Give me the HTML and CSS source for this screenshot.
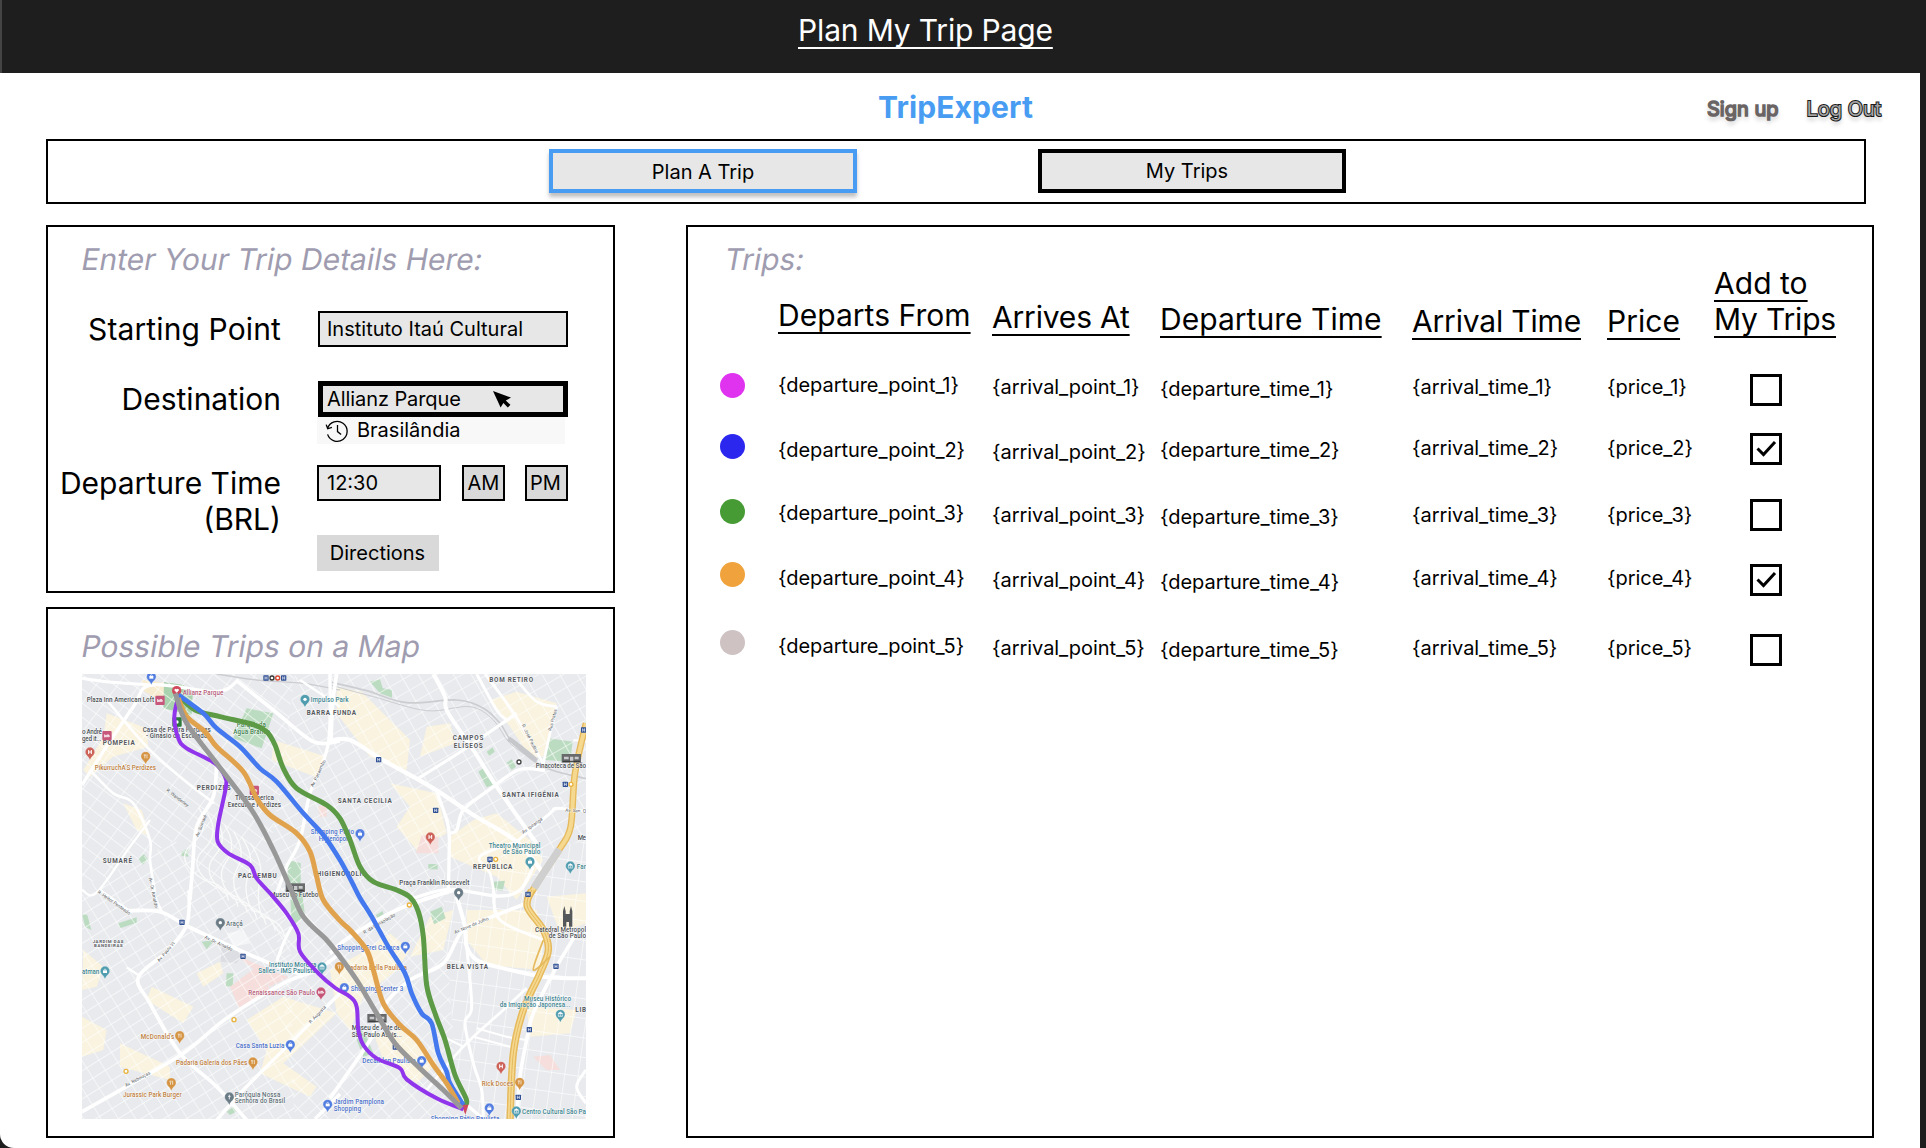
FILE: index.html
```html
<!DOCTYPE html>
<html lang="en">
<head>
<meta charset="utf-8">
<title>Plan My Trip Page</title>
<link rel="stylesheet" href="styles.css">
</head>
<body>
<header class="topbar"><h1 class="topbar-title">Plan My Trip Page</h1></header>
<main class="page">
  <div class="brandbar">
    <div class="brand">TripExpert</div>
    <div class="auth"><a class="signup">Sign up</a><a class="logout">Log Out</a></div>
  </div>
  <nav class="tabs">
    <button class="tab tab-active">Plan A Trip</button>
    <button class="tab tab-plain">My Trips</button>
  </nav>
  <div class="columns">
    <div class="left">
      <section class="panel details">
        <h2 class="panel-title">Enter Your Trip Details Here:</h2>
        <div class="field field-start">
          <span class="label">Starting Point</span>
          <span class="input">Instituto Itaú Cultural</span>
        </div>
        <div class="field field-dest">
          <span class="label">Destination</span>
          <div class="combo">
            <span class="input input-focus">Allianz Parque
              <svg class="cursor" viewBox="0 0 18 17"><path d="M0 0 L18 6.6 L12.8 9.6 L17.4 13.8 L14.8 16.6 L10.4 12 L7.6 16.6 Z"/></svg>
            </span>
            <span class="suggestion">
              <svg class="history" viewBox="0 0 24 24" fill="none" stroke="#000" stroke-width="1.3"><path d="M2.6 9.3A10 10 0 1 1 2.6 15.4M1.2 5.6l1.5 4.2 4.2-1.4M12.5 6v6.6l3.6 3"/></svg>
              Brasilândia
            </span>
          </div>
        </div>
        <div class="field field-time">
          <span class="label">Departure Time<br><span class="unit">(BRL)</span></span>
          <div class="time-side">
            <div class="time-row">
              <span class="input input-time">12:30</span>
              <button class="meridiem">AM</button>
              <button class="meridiem meridiem-pm">PM</button>
            </div>
            <button class="directions">Directions</button>
          </div>
        </div>
      </section>
      <section class="panel map-panel">
        <h2 class="panel-title">Possible Trips on a Map</h2>
        <svg class="map" id="map" viewBox="0 0 1512 1335"></svg>
      </section>
    </div>
    <section class="panel trips">
      <h2 class="panel-title">Trips:</h2>
      <div class="row head">
        <span></span>
        <span class="o0">Departs From</span><span class="o2 tight">Arrives At</span><span class="o4">Departure Time</span>
        <span class="o6 tight">Arrival Time</span><span class="o6">Price</span><span class="add">Add to<br><span class="tight">My Trips</span></span>
      </div>
      <div class="row r1">
        <i class="dot magenta"></i><span>{departure_point_1}</span><span class="o2">{arrival_point_1}</span><span class="o4">{departure_time_1}</span><span class="o2">{arrival_time_1}</span><span class="o2">{price_1}</span><i class="check m1"></i>
      </div>
      <div class="row r2">
        <i class="dot blue m1"></i><span class="o5">{departure_point_2}</span><span class="o7">{arrival_point_2}</span><span class="o5">{departure_time_2}</span><span class="o3">{arrival_time_2}</span><span class="o3">{price_2}</span><i class="check"><svg viewBox="0 0 26 26"><path d="M4.5 12.5l6 6L22 6"/></svg></i>
      </div>
      <div class="row r3">
        <i class="dot green"></i><span class="o2">{departure_point_3}</span><span class="o4">{arrival_point_3}</span><span class="o6">{departure_time_3}</span><span class="o4">{arrival_time_3}</span><span class="o4">{price_3}</span><i class="check"></i>
      </div>
      <div class="row r4">
        <i class="dot orange"></i><span class="o4">{departure_point_4}</span><span class="o6">{arrival_point_4}</span><span class="o8">{departure_time_4}</span><span class="o4">{arrival_time_4}</span><span class="o4">{price_4}</span><i class="check m2"><svg viewBox="0 0 26 26"><path d="M4.5 12.5l6 6L22 6"/></svg></i>
      </div>
      <div class="row r5">
        <i class="dot grey"></i><span class="o4">{departure_point_5}</span><span class="o6">{arrival_point_5}</span><span class="o8">{departure_time_5}</span><span class="o6">{arrival_time_5}</span><span class="o6">{price_5}</span><i class="check m4"></i>
      </div>
    </section>
  </div>
</main>
<script src="map.js"></script>
</body>
</html>
```
FILE: styles.css
```css
* { box-sizing: border-box; }
body { margin: 0; width: 1926px; height: 1148px; overflow: hidden; background: #1e1e1e; color: #000; font: 20px/24px Inter, "Liberation Sans", sans-serif; }
button { padding: 0; margin: 0; font: inherit; color: inherit; border-radius: 0; }
h1, h2 { margin: 0; font-weight: 400; font-size: 30px; line-height: 36px; }

.topbar { display: flex; height: 73px; padding: 12px 0 0 796px; border-left: 2px solid #444; color: #fff; }
.topbar-title { letter-spacing: -.15px; text-decoration: underline 2px; text-underline-offset: 6px; text-decoration-skip-ink: none; white-space: nowrap; }
.page { width: 1920px; height: 1075px; padding: 0 46px; background: #fff; border-bottom-left-radius: 14px; }

.brandbar { display: flex; height: 66px; padding: 16px 0 0 832px; }
.brand { width: 153px; font-size: 30px; line-height: 36px; font-weight: 700; letter-spacing: .1px; color: #489df3; white-space: nowrap; }
.auth { display: flex; gap: 28px; padding: 8px 0 0 676px; white-space: nowrap; text-shadow: 0 4px 4px rgba(0,0,0,.25); }
.signup { color: #6a6464; -webkit-text-stroke: 1.6px #6a6464; }
.logout { color: #a3a3a3; -webkit-text-stroke: 2px #1b1b1b; paint-order: stroke fill; }

.tabs { display: flex; gap: 181px; width: 1820px; height: 65px; padding: 8px 0 0 501px; border: 2px solid #000; }
.tab { width: 308px; height: 44px; padding-top: 1px; border: 4px solid #000; background: #e7e7e7; }
.tab-active { border-color: #489df3; box-shadow: 0 4px 4px rgba(0,0,0,.25); }
.tab-plain { padding: 0 10px 0 0; }

.columns { display: flex; gap: 71px; padding-top: 21px; }
.left { display: flex; flex-direction: column; gap: 14px; width: 569px; }
.panel { border: 2px solid #000; }
.panel-title { width: max-content; color: #a09cb0; white-space: nowrap; transform: skewX(-10deg); transform-origin: 0 29px; }
.details { height: 368px; padding-top: 14px; }
.details .panel-title, .map-panel .panel-title { margin-left: 32px; }
.field { display: grid; grid-template-columns: 233px 1fr; column-gap: 37px; }
.label { font-size: 30px; line-height: 36px; text-align: right; white-space: nowrap; }
.field-start .label { letter-spacing: .12px; }
.input { display: flex; align-items: center; justify-content: space-between; width: 250px; height: 36px; padding-left: 7px; border: 2px solid #000; background: #e7e7e7; }
.field-start { height: 70px; margin-top: 34px; }
.field-dest { height: 84px; }
.input-focus { border-width: 5px; padding: 0 52px 0 4px; letter-spacing: -.08px; }
.cursor { width: 18px; height: 17px; }
.suggestion { display: flex; align-items: center; gap: 8px; width: 248px; height: 27px; margin-left: -1px; padding: 0 0 1px 8px; background: #f8f8f8; }
.history { width: 24px; height: 24px; margin-top: 1px; }
.time-row { display: flex; margin-left: -1px; }
.input-time { width: 124px; padding-left: 8px; }
.meridiem { width: 43px; height: 36px; margin-left: 21px; border: 2px solid #000; background: #d9d9d9; }
.meridiem-pm { margin-left: 20px; padding: 0 2px 1px 0; }
.directions { display: block; width: 122px; height: 36px; margin: 34px 0 0 -1px; padding-right: 1px; border: 0; background: #d9d9d9; }
.map-panel { height: 531px; padding-top: 19px; }
.map { display: block; width: 504px; height: 445px; margin: 10px 0 0 34px; }

.trips { width: 1188px; height: 913px; padding: 14px 0 0 32px; }
.trips .panel-title { height: 24px; margin-left: 3px; }
.row { display: grid; grid-template-columns: 58px 214px 168px 252px 195px 143px 32px; align-items: start; white-space: nowrap; letter-spacing: -.05px; }
.head { height: 108px; padding-top: 32px; font-size: 30px; line-height: 36px; letter-spacing: .04px; }
.head > span { text-decoration: underline 2px; text-underline-offset: 6px; text-decoration-skip-ink: none; }
.head .tight { letter-spacing: -.18px; }
.head .add { margin: -32px 0 0 -36px; }
.r1 { height: 60px; } .r2 { height: 66px; } .r3 { height: 63px; } .r4 { height: 68px; }
.o2 { padding-top: 2px; } .o3 { padding-top: 3px; } .o4 { padding-top: 4px; } .o5 { padding-top: 5px; }
.o6 { padding-top: 6px; } .o7 { padding-top: 7px; } .o8 { padding-top: 8px; }
.m1 { margin-top: 1px; } .m2 { margin-top: 2px; } .m4 { margin-top: 4px; }
.dot { width: 25px; height: 25px; border-radius: 50%; }
.magenta { background: #e033ef; } .blue { background: #2c27ee; } .green { background: #469b35; } .orange { background: #f0a33c; } .grey { background: #cec2c3; }
.check { width: 32px; height: 32px; border: 3px solid #000; }
.check svg { display: block; width: 26px; height: 26px; fill: none; stroke: #000; stroke-width: 3; }

.map text { font-family: Roboto, "Liberation Sans", sans-serif; font-weight: 500; paint-order: stroke; stroke: #fff; stroke-width: 3px; stroke-opacity: .7; }
.map .area { font-weight: 700; }
.map .street { font-weight: 400; }
```
FILE: map.js
```js
const svg = document.getElementById('map');
// Origin of each map tile in map units.
const T = { a: [-36, -42], b: [744, -42], c: [-36, 648], d: [744, 648] };
let out = '';
const at = (t, x, y) => [x + T[t][0], y + T[t][1]];
const pts = (t, list) => { const r = []; for (let i = 0; i < list.length; i += 2) r.push(at(t, list[i], list[i + 1])); return r; };
const straight = p => 'M' + p.map(q => q.join(' ')).join('L');
function smooth(p) {
  let d = 'M' + p[0].join(' ');
  for (let i = 0; i < p.length - 1; i++) {
    const a = p[i - 1] || p[i], b = p[i], c = p[i + 1], e = p[i + 2] || c;
    d += `C${b[0] + (c[0] - a[0]) / 6} ${b[1] + (c[1] - a[1]) / 6} ${c[0] - (e[0] - b[0]) / 6} ${c[1] - (e[1] - b[1]) / 6} ${c[0]} ${c[1]}`;
  }
  return d;
}
const area = (t, fill, ...l) => { out += `<path d="${straight(pts(t, l))}Z" fill="${fill}"/>`; };
const road = (t, w, ...l) => { out += `<path d="${smooth(pts(t, l))}" fill="none" stroke="#fff" stroke-width="${w}"/>`; };
const line = (t, color, w, ...l) => { out += `<path d="${smooth(pts(t, l))}" fill="none" stroke="${color}" stroke-width="${w}"/>`; };

const grid = (id, w, h, r, s) => `<pattern id="${id}" width="${w}" height="${h}" patternUnits="userSpaceOnUse" patternTransform="rotate(${r})"><path d="M0 0H${w}M0 0V${h}" stroke="#fff" stroke-opacity=".85" stroke-width="${s}"/></pattern>`;
out += '<defs>' + grid('g1', 52, 34, 37, 4) + grid('g2', 38, 46, 60, 4) + grid('g3', 44, 36, -32, 4) + grid('g4', 40, 58, 8, 4) + grid('g5', 34, 46, 47, 4) + '</defs>';
out += '<rect width="1512" height="1335" fill="#e8eaed"/>';

// commercial blocks
const Y = '#f9f3df';
area('a', '#f7ecd0', 215, 60, 282, 68, 282, 130, 220, 92);
area('a', Y, 110, 160, 230, 205, 235, 260, 130, 290, 60, 350, 40, 330, 100, 230);
area('a', Y, 160, 430, 215, 450, 240, 530, 200, 510);
area('a', Y, 610, 240, 770, 290, 735, 350, 605, 300);
area('b', Y, 20, 80, 95, 95, 240, 240, 230, 330, 120, 290, 20, 160);
area('b', Y, 290, 200, 360, 190, 375, 250, 270, 290);
area('b', Y, 480, 120, 560, 95, 680, 130, 640, 290, 600, 290, 540, 200);
area('b', Y, 180, 370, 320, 400, 350, 520, 260, 570, 200, 500, 240, 440);
area('b', Y, 430, 480, 500, 460, 600, 540, 640, 600, 560, 720, 500, 650, 360, 590, 360, 530);
area('c', Y, 40, 180, 100, 230, 80, 290, 36, 300);
area('c', Y, 380, 250, 450, 215, 460, 250, 400, 290);
area('c', Y, 245, 290, 370, 350, 340, 400, 230, 330);
area('c', Y, 36, 380, 110, 420, 100, 480, 36, 500);
area('c', Y, 150, 460, 300, 530, 300, 570, 150, 530);
area('c', Y, 530, 390, 640, 320, 800, 370, 640, 520, 740, 590, 720, 620, 570, 550, 590, 480);
area('d', Y, 410, 60, 620, 60, 640, 150, 630, 240, 470, 225, 410, 150);
area('d', Y, 650, 20, 768, 10, 768, 100, 690, 130);
area('d', Y, 0, 240, 110, 180, 180, 130, 240, 180, 200, 240, 100, 320, 60, 420, 20, 370);
area('d', Y, 130, 430, 220, 420, 320, 520, 260, 580, 160, 510);
area('d', Y, 590, 350, 740, 360, 720, 430, 600, 440);
area('d', Y, 300, 80, 370, 60, 340, 180, 240, 200);

// parks, hospitals and large plots
const G = '#bcdcc1', R = '#f5dedb';
area('a', '#a9d2ae', 282, 66, 340, 75, 368, 105, 365, 165, 280, 145);
area('a', G, 530, 145, 610, 160, 575, 265, 490, 235);
area('a', G, 655, 600, 692, 610, 692, 720, 650, 690);
area('a', G, 205, 595, 222, 583, 234, 598, 218, 614);
area('a', G, 335, 575, 355, 565, 355, 590, 335, 588);
area('a', R, 745, 440, 770, 430, 770, 470, 750, 470);
area('b', G, 120, 65, 150, 58, 158, 85, 186, 90, 186, 113, 150, 100);
area('b', G, 655, 235, 728, 245, 720, 305, 645, 300);
area('b', G, 445, 335, 460, 325, 490, 375, 470, 382);
area('b', G, 530, 308, 545, 298, 558, 320, 545, 330);
area('b', G, 470, 275, 488, 262, 494, 275, 478, 287);
area('b', G, 295, 612, 323, 612, 323, 628, 295, 628);
area('b', G, 490, 665, 525, 662, 518, 692, 492, 688);
area('b', R, 275, 525, 325, 530, 325, 580, 258, 580);
area('c', G, 145, 100, 200, 82, 200, 98, 150, 115);
area('c', G, 395, 155, 435, 150, 410, 178);
area('c', G, 470, 250, 490, 250, 488, 290, 468, 288);
area('c', G, 660, 0, 695, 0, 705, 75, 665, 110);
area('c', G, 36, 72, 52, 75, 64, 120, 45, 110);
area('c', G, 470, 665, 490, 650, 498, 665, 480, 675);
area('c', R, 480, 290, 560, 230, 600, 300, 510, 360);
area('c', R, 498, 195, 600, 240, 655, 262, 600, 290, 560, 245);
area('c', '#dcdee3', 455, 165, 520, 190, 500, 220, 452, 215);
area('c', '#f4f5f6', 470, 130, 520, 120, 540, 160, 490, 170);
area('d', G, 300, 65, 335, 50, 347, 85, 312, 103);
area('d', G, 80, 400, 110, 440, 130, 490, 100, 500, 80, 450);
area('d', G, 138, 75, 158, 63, 162, 78, 144, 88);
area('d', R, 610, 500, 660, 495, 690, 540, 650, 540);

// local streets
const net = (id, d) => { out += `<path d="${d}" fill="url(#${id})"/>`; };
net('g1', 'M0 0H640L560 560 400 640 280 500 0 640Z');
net('g3', 'M0 640L280 500 400 640 620 640 640 1335H0Z');
net('g2', 'M640 0H1512V500L1080 600 900 660 560 560Z');
net('g5', 'M560 560L900 660 1080 600 1130 1335H640Z');
net('g4', 'M1080 600L1512 500V1335H1130Z');
out += '<g fill="none" stroke="#fafafa" stroke-width="4">';
for (let i = 0; i < 7; i++) out += `<path d="M${350 + i * 26} ${400 + i * 18}q40 60 ${-20 + i * 8} 110t${40 - i * 6} 110q60 10 70 60"/>`;
out += '</g>';

// railway
const rail = '#cbcdd0';
line('a', rail, 4, 440, 42, 560, 60, 700, 70, 810, 90);
line('b', rail, 5, 0, 66, 110, 92, 230, 128, 380, 120, 460, 145, 510, 190, 550, 250, 640, 320, 768, 356);
line('b', rail, 3, 0, 75, 130, 110, 290, 152, 420, 140, 490, 180, 540, 250, 620, 305);
line('b', '#c5c7cb', 14, 535, 235, 575, 265, 620, 302);

// avenues
road('a', 10, 36, 375, 90, 290, 190, 140, 245, 75, 440, 95, 505, 60);
road('a', 9, 36, 55, 110, 65, 245, 75);
road('a', 8, 110, 120, 230, 260, 330, 350, 432, 430);
road('a', 8, 60, 330, 130, 400, 190, 430, 240, 540, 240, 600, 255, 700);
road('a', 11, 440, 310, 430, 410, 380, 500, 368, 620, 360, 720);
road('a', 11, 500, 62, 610, 150, 730, 245, 810, 243);
road('a', 10, 780, 42, 775, 250, 720, 400, 690, 540, 650, 620, 620, 700);
road('a', 7, 36, 690, 80, 698, 180, 560, 240, 480);
road('a', 7, 690, 60, 810, 140);
road('b', 13, 0, 242, 60, 240, 150, 295, 310, 385, 430, 465, 560, 545, 640, 640);
road('b', 11, 20, 42, 8, 130, 3, 245);
road('b', 12, 310, 42, 345, 110, 352, 155, 430, 270, 500, 380, 620, 550);
road('b', 9, 260, 358, 400, 270, 560, 160);
road('b', 10, 645, 332, 565, 330, 470, 395, 400, 450, 380, 510, 357, 520);
road('b', 10, 320, 395, 355, 500, 357, 600, 355, 690);
road('b', 9, 440, 42, 500, 150, 530, 180);
road('b', 8, 465, 42, 555, 165, 645, 320);
road('b', 8, 680, 140, 660, 220, 640, 310);
road('b', 8, 560, 60, 620, 125, 680, 140);
road('b', 9, 560, 545, 660, 460, 680, 445, 768, 455);
road('b', 8, 560, 545, 450, 590, 480, 640, 495, 715);
road('b', 10, 240, 718, 355, 688, 500, 708, 570, 690, 610, 620);
road('b', 6, 730, 240, 768, 245);
road('c', 11, 36, 665, 160, 595, 340, 490, 470, 385, 640, 280, 740, 240, 810, 190);
road('c', 11, 170, 62, 270, 65, 345, 105, 440, 150, 600, 220, 700, 255);
road('c', 11, 358, 0, 350, 105, 290, 185, 205, 262, 240, 340, 330, 490, 440, 590, 530, 690);
road('c', 8, 90, 0, 180, 65);
road('c', 8, 245, 0, 275, 65);
road('c', 9, 665, 110, 640, 160, 620, 215);
road('c', 10, 810, 310, 740, 380, 620, 500, 520, 600, 440, 690);
road('c', 10, 735, 687, 810, 612);
road('c', 7, 170, 232, 205, 255);
road('d', 12, 0, 190, 60, 140, 200, 60, 370, 0);
road('d', 12, 380, 20, 405, 110, 410, 170, 440, 210, 500, 230, 640, 260, 768, 265);
road('d', 11, 590, 40, 500, 75, 400, 120, 340, 220, 240, 270, 160, 350, 120, 450, 0, 625);
road('d', 9, 410, 170, 425, 350, 405, 400, 430, 520, 455, 600, 460, 687);
road('d', 9, 490, 0, 510, 90, 640, 150);
road('d', 8, 590, 295, 520, 360, 400, 470, 290, 600);
road('d', 6, 440, 415, 530, 440, 590, 450);
road('d', 6, 430, 440, 540, 470);
road('d', 11, 740, 130, 680, 230, 610, 370, 590, 450, 570, 560, 560, 687);
road('d', 9, 768, 540, 740, 590, 768, 640);
road('d', 10, 370, 610, 460, 687);
road('d', 6, 350, 445, 400, 470);

// expressway
line('b', '#e5b95c', 20, 768, 190, 735, 340, 722, 500, 690, 565, 640, 640, 590, 720);
line('b', '#f6d990', 12, 768, 190, 735, 340, 722, 500, 690, 565, 640, 640, 590, 720);
line('b', '#cfcfcf', 22, 688, 568, 650, 625, 612, 684);
line('d', '#e5b95c', 22, 605, 0, 592, 50, 640, 120, 655, 180, 630, 250, 580, 360, 550, 490, 540, 690);
line('d', '#f6d990', 13, 605, 0, 592, 50, 640, 120, 655, 180, 630, 250, 580, 360, 550, 490, 540, 690);
line('d', '#e5b95c', 3, 605, 0, 592, 50, 640, 120, 655, 180, 630, 250, 580, 360, 550, 490, 540, 690);
line('d', '#e5b95c', 5, 660, 200, 610, 240, 640, 150);

// labels
const label = (t, cls, color, size, x, y, w, s, rot) => {
  const [X, Y2] = at(t, x, y);
  out += `<text class="${cls}" x="${X}" y="${Y2}" fill="${color}" font-size="${size}"${w ? ` textLength="${w}"` : ''}${rot ? ` transform="rotate(${rot} ${X} ${Y2})"` : ''}>${s}</text>`;
};
const D = '#55585c', K = '#4b4f54', P = '#b65a78', TE = '#3d8590', BL = '#4a6fc9', OR = '#c08040', GR = '#5f7178', RD = '#c0655a';
[['a', 710, 166, 148, 'BARRA FUNDA'], ['a', 98, 256, 96, 'POMPEIA'], ['a', 380, 390, 102, 'PERDIZES'], ['a', 98, 608, 88, 'SUMARÉ'], ['a', 504, 655, 116, 'PACAEMBU'], ['a', 740, 647, 148, 'HIGIENÓPOLIS'],
 ['b', 478, 65, 131, 'BOM RETIRO'], ['b', 368, 240, 92, 'CAMPOS'], ['b', 371, 263, 87, 'ELÍSEOS'], ['b', 516, 412, 170, 'SANTA IFIGÊNIA'], ['b', 23, 428, 162, 'SANTA CECILIA'], ['b', 429, 628, 118, 'REPÚBLICA'],
 ['d', 350, 236, 124, 'BELA VISTA'], ['d', 736, 367, 32, 'LIB']].forEach(l => label(l[0], 'area', D, 19, l[1], l[2], l[3], l[4]));
label('c', 'area', D, 13, 68, 158, 92, 'JARDIM DAS'); label('c', 'area', D, 13, 72, 172, 86, 'BANDEIRAS');
[['a', K, 50, 127, 202, 'Plaza Inn American Loft'], ['a', P, 338, 104, 122, 'Allianz Parque'], ['a', K, 218, 215, 204, 'Casa de Pedra Perdizes'], ['a', K, 228, 235, 184, '- Ginásio de Escalada'],
 ['a', '#3f7f4e', 500, 202, 88, 'Parque da'], ['a', '#3f7f4e', 490, 223, 110, 'Água Branca'], ['a', TE, 722, 127, 114, 'Impulso Park'], ['a', K, 36, 222, 60, 'o André'], ['a', K, 36, 242, 58, 'ged it...'],
 ['a', OR, 74, 331, 184, 'PikurruchA’S Perdizes'], ['a', K, 495, 421, 117, 'Transamerica'], ['a', K, 473, 441, 160, 'Executive Perdizes'], ['a', BL, 722, 523, 130, 'Shopping Pátio'], ['a', BL, 746, 542, 100, 'Higienópolis'],
 ['a', K, 600, 712, 150, 'Museu do Futebol'], ['b', K, 617, 323, 151, 'Pinacoteca de São'], ['b', TE, 476, 563, 155, 'Theatro Municipal'], ['b', TE, 518, 582, 113, 'de São Paulo'], ['b', K, 208, 676, 210, 'Praça Franklin Roosevelt'], ['b', K, 743, 541, 25, 'Me'], ['b', TE, 740, 627, 28, 'Far'],
 ['c', GR, 468, 107, 50, 'Araçá'], ['c', TE, 36, 253, 52, 'atman'], ['c', TE, 597, 230, 142, 'Instituto Moreira'], ['c', TE, 565, 249, 172, 'Salles - IMS Paulista'], ['c', P, 535, 316, 200, 'Renaissance São Paulo'],
 ['c', OR, 212, 448, 101, 'McDonald’s'], ['c', BL, 497, 475, 146, 'Casa Santa Luzia'], ['c', OR, 318, 526, 214, 'Padaria Galeria dos Pães'], ['c', OR, 159, 620, 176, 'Jurassic Park Burger'], ['c', GR, 494, 621, 137, 'Paróquia Nossa'], ['c', GR, 494, 640, 151, 'Senhora do Brasil'],
 ['d', BL, 22, 179, 186, 'Shopping Frei Caneca'], ['d', OR, 48, 240, 183, 'Padaria Bella Paulista'], ['d', BL, 62, 302, 158, 'Shopping Center 3'], ['d', K, 65, 420, 148, 'Museu de Arte de'], ['d', K, 65, 440, 150, 'São Paulo Assis...'],
 ['d', BL, 97, 520, 160, 'Decathlon Paulista'], ['d', BL, 11, 643, 151, 'Jardim Pamplona'], ['d', BL, 11, 662, 82, 'Shopping'], ['d', BL, 302, 694, 206, 'Shopping Pátio Paulista'],
 ['d', K, 615, 127, 153, 'Catedral Metropol'], ['d', K, 656, 145, 112, 'de São Paulo'], ['d', TE, 582, 332, 141, 'Museu Histórico'], ['d', TE, 509, 351, 212, 'da Imigração Japonesa...'], ['d', OR, 455, 588, 95, 'Rick Doces'], ['d', TE, 576, 673, 192, 'Centro Cultural São Pa']
].forEach(l => label(l[0], 'poi', l[1], 19, l[2], l[3], l[4], l[5]));
[['a', 288, 392, 38, 'R. Wanderley'], ['a', 385, 532, -68, 'Av. Sumaré'], ['a', 730, 382, -65, 'Av. Pacaembu'], ['a', 236, 655, 78, 'Av. Dr. Arnaldo'], ['b', 575, 195, 64, 'R. José Paulino'], ['b', 664, 214, -75, 'Rua Prates'], ['b', 580, 522, -36, 'Av. Ipiranga'], ['b', 706, 455, 3, 'Av. Sen. Q'],
 ['c', 82, 8, 35, 'R. Heitor Penteado'], ['c', 268, 217, -50, 'Av. Paulo VI'], ['c', 403, 145, 25, 'Av. Dr. Arnaldo'], ['c', 168, 591, -28, 'Av. Rebouças'], ['c', 722, 401, -46, 'R. Augusta'], ['d', 103, 132, -30, 'R. da Consolação'], ['d', 375, 132, -23, 'Av. Nove de Julho']
].forEach(l => label(l[0], 'street', '#55585b', 14, l[1], l[2], 0, l[4], l[3]));

// map pins; the point is the centre of the head
const GL = {
  food: '<path d="M-4-6v5M-1-6v5M-2.500-1v7M4-6v12" stroke="#fff" stroke-width="2" fill="none"/>',
  bag: '<path d="M-6-2H6V6H-6Z" fill="#fff"/><path d="M-3-2a3 4 0 0 1 6 0" stroke="#fff" stroke-width="2" fill="none"/>',
  H: '<path d="M-4-6V6M4-6V6M-4 0H4" stroke="#fff" stroke-width="3" fill="none"/>',
  dot: '<circle r="5" fill="#fff"/>',
  bed: '<path d="M-7-4V5M-7 3H7V0H-7M-1-2H6" stroke="#fff" stroke-width="2.500" fill="none"/>',
  cross: '<path d="M0-7V7M-4-2H4" stroke="#fff" stroke-width="2.500" fill="none"/>',
  heart: '<path d="M0 6L-7-1A4 4 0 0 1 0-4A4 4 0 0 1 7-1Z" fill="#fff"/>',
  inst: '<path d="M-7-2L0-7L7-2ZM-6 0V5M0 0V5M6 0V5M-7 6H7" fill="#fff" stroke="#fff" stroke-width="2"/>'
};
[['a', 244, 50, '#527de0', 'bag'], ['a', 705, 118, '#509db0', 'dot'], ['a', 60, 276, '#cc6258', 'H'], ['a', 227, 289, '#d59443', 'food'], ['b', 90, 521, '#527de0', 'bag'], ['b', 301, 531, '#cc6258', 'H'], ['b', 600, 605, '#509db0', 'bag'], ['b', 721, 618, '#509db0', 'inst'], ['b', 386, 698, '#6b7c87', 'dot'],
 ['c', 451, 98, '#6b7c87', 'dot'], ['c', 105, 243, '#509db0', 'bag'], ['c', 756, 231, '#509db0', 'inst'], ['c', 753, 306, '#c55477', 'bed'], ['c', 808, 230, '#d59443', 'food'], ['c', 329, 437, '#d59443', 'food'], ['c', 661, 464, '#527de0', 'bag'], ['c', 549, 516, '#d59443', 'food'], ['c', 304, 578, '#d59443', 'food'], ['c', 478, 621, '#6b7c87', 'cross'], ['c', 773, 643, '#527de0', 'bag'],
 ['d', 226, 169, '#527de0', 'bag'], ['d', 43, 293, '#527de0', 'bag'], ['d', 275, 512, '#527de0', 'bag'], ['d', 691, 373, '#509db0', 'inst'], ['d', 513, 529, '#cc6258', 'H'], ['d', 569, 577, '#d59443', 'food'], ['d', 478, 654, '#527de0', 'bag'], ['d', 559, 663, '#509db0', 'inst']
].forEach(([t, x, y, c, g]) => { const p = at(t, x, y); out += `<g transform="translate(${p[0]} ${p[1]})"><path d="M-14 0A14 14 0 1 1 14 0C14 10 4 12 0 24C-4 12-14 10-14 0Z" fill="${c}" stroke="#fff" stroke-opacity=".6"/>${GL[g]}</g>`; });
[['a', 270, 121, '#c8577c', 'bed'], ['a', 111, 227, '#c8577c', 'bed'], ['a', 553, 391, '#c8577c', 'bed'], ['a', 321, 186, '#2d7a3c', 'dot']].forEach(([t, x, y, c, g]) => { const p = at(t, x, y); out += `<g transform="translate(${p[0]} ${p[1]})"><rect x="-14" y="-14" width="28" height="28" rx="3" fill="${c}"/>${GL[g]}</g>`; });
// metro stations
[['a', 588, 54], ['a', 641, 54], ['b', 146, 299], ['b', 317, 451], ['b', 706, 373], ['b', 761, 210], ['b', 480, 598], ['b', 594, 703], ['c', 336, 97], ['c', 519, 199], ['d', 678, 229], ['d', 598, 419], ['d', 565, 622], ['d', 196, 471]].forEach(([t, x, y]) => { const p = at(t, x, y); out += `<g transform="translate(${p[0]} ${p[1]})"><rect x="-8" y="-8" width="16" height="16" rx="2" fill="#2f4f94"/><path d="M-3-5V5M3-5V5M-3 0H3" stroke="#fff" stroke-width="2"/></g>`; });
[['a', 606, 54, '#333'], ['a', 623, 54, '#d8452f'], ['b', 567, 306, '#444'], ['b', 723, 373, '#e8b33c'], ['b', 497, 598, '#e8b33c'], ['c', 492, 389, '#e8b33c'], ['c', 168, 544, '#e8b33c'], ['d', 238, 45, '#e8b33c']].forEach(([t, x, y, c]) => { const p = at(t, x, y); out += `<circle cx="${p[0]}" cy="${p[1]}" r="6" fill="#fff" stroke="${c}" stroke-width="4"/>`; });
// landmarks
[['a', 676, 682], ['b', 724, 294], ['d', 141, 384]].forEach(([t, x, y]) => { const p = at(t, x, y); out += `<g transform="translate(${p[0]} ${p[1]})"><path d="M-29-12H29V14H-29Z" fill="#686a6c"/><path d="M-22-4H-8V4H-22ZM-4-4H6V14H-4ZM10-4H22V4H10Z" fill="#c9cacb"/><path d="M-26 10H26" stroke="#333" stroke-width="3"/></g>`; });
{ const p = at('d', 713, 82); out += `<path transform="translate(${p[0]} ${p[1]})" d="M-14 28V-18L-10-34L-6-18V-10H6V-18L10-34L14-18V28H4V14H-4V28Z" fill="#55585b"/>`; }

// destination pins
out += '<circle cx="284" cy="50" r="14" fill="#cf4a5c"/>';
out += '<path d="M1138 1290h22l-10 32Z" fill="#cf4a5c"/>';

// candidate routes
const routes = [
  ['#5c9a46', 15, [294,68,339,108,414,128,509,150,554,173,579,213,604,283,644,343,734,393,774,433,804,498,834,578,874,623,944,648,984,670,1009,713,1024,788,1034,933,1059,1018,1089,1098,1119,1203,1152,1273,1152,1292]],
  ['#4478ef', 14, [289,63,364,118,404,163,474,218,534,283,584,323,664,418,724,483,774,558,809,623,834,672,869,728,919,818,969,898,989,958,1019,1018,1049,1048,1069,1138,1094,1193,1104,1228,1144,1293]],
  ['#e1a24d', 15, [289,73,314,128,369,173,404,218,484,293,524,373,564,423,644,478,684,533,704,608,724,678,774,740,804,768,854,828,874,888,904,988,954,1053,1004,1098,1054,1173,1094,1228,1129,1288]],
  ['#9035ec', 12, [287,75,277,130,289,193,314,223,399,268,429,308,431,343,409,448,407,503,439,538,504,573,524,613,569,663,614,718,649,778,654,833,709,898,760,942,804,968,824,998,829,1068,844,1113,884,1153,954,1183,974,1216,1064,1273,1144,1306]],
  ['#989898', 15, [280,58,314,148,404,268,509,408,574,528,624,640,664,728,734,798,774,848,824,918,884,1018,939,1108,1014,1183,1084,1248,1139,1303]]
];
routes.forEach(([c, w, l]) => { const p = []; for (let i = 0; i < l.length; i += 2) p.push([l[i], l[i + 1]]); out += `<path d="${smooth(p)}" fill="none" stroke="${c}" stroke-width="${w}" stroke-linejoin="round"/>`; });
out += '<g transform="translate(284 50)">' + GL.heart + '</g>';
svg.innerHTML = out;
```
